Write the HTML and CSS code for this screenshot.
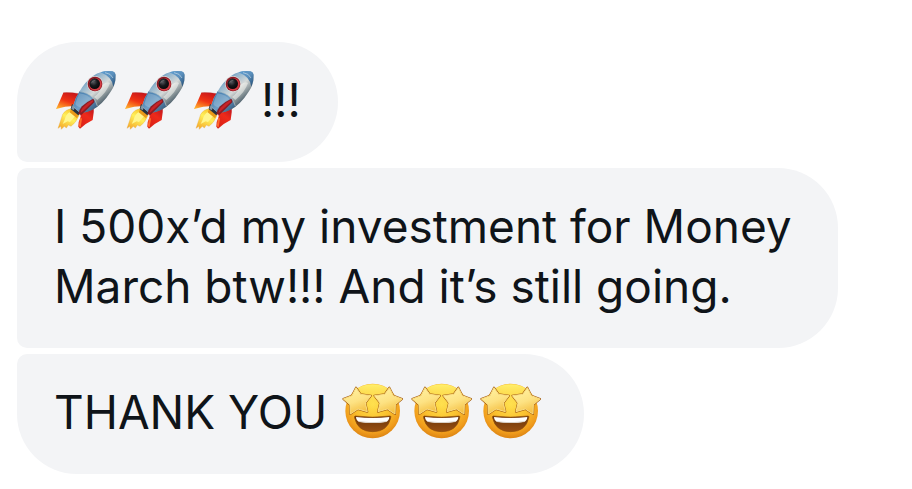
FILE: index.html
```html
<!DOCTYPE html>
<html lang="en">
<head>
    <meta charset="UTF-8">
    <meta name="viewport" content="width=device-width, initial-scale=1.0">
    <title>Messages</title>
    <link rel="stylesheet" href="styles.css">
</head>
<body>

    <!-- Emoji shapes, reused by the messages below -->
    <svg class="sprite" aria-hidden="true">
        <defs>
            <linearGradient id="hull" x1="0.2" y1="0.15" x2="0.75" y2="0.8">
                <stop offset="0" stop-color="#3d7cb0"/>
                <stop offset="0.25" stop-color="#8fb3cc"/>
                <stop offset="0.55" stop-color="#d5d9d8"/>
                <stop offset="0.8" stop-color="#7d8a8f"/>
                <stop offset="1" stop-color="#33495a"/>
            </linearGradient>
            <linearGradient id="nose" x1="0" y1="0" x2="1" y2="1">
                <stop offset="0" stop-color="#5c9cd0"/>
                <stop offset="0.5" stop-color="#5b90bd"/>
                <stop offset="1" stop-color="#1f4870"/>
            </linearGradient>
            <linearGradient id="band" x1="0" y1="0" x2="1" y2="1">
                <stop offset="0" stop-color="#2f6ba2"/>
                <stop offset="0.5" stop-color="#6f9fc6"/>
                <stop offset="1" stop-color="#26496c"/>
            </linearGradient>
            <linearGradient id="finLeft" x1="0.7" y1="0" x2="0.2" y2="1">
                <stop offset="0" stop-color="#c9161a"/>
                <stop offset="0.5" stop-color="#f03414"/>
                <stop offset="1" stop-color="#ffb02c"/>
            </linearGradient>
            <linearGradient id="finRight" x1="0.8" y1="0" x2="0.3" y2="1">
                <stop offset="0" stop-color="#b41220"/>
                <stop offset="0.5" stop-color="#ee2a1a"/>
                <stop offset="1" stop-color="#d92118"/>
            </linearGradient>
            <linearGradient id="flame" x1="0.8" y1="0" x2="0.2" y2="1">
                <stop offset="0" stop-color="#f7b91e"/>
                <stop offset="0.45" stop-color="#fff05a"/>
                <stop offset="1" stop-color="#f5a92a"/>
            </linearGradient>
            <radialGradient id="glass" cx="0.4" cy="0.35" r="0.7">
                <stop offset="0" stop-color="#55565c"/>
                <stop offset="0.5" stop-color="#17181c"/>
                <stop offset="1" stop-color="#050506"/>
            </radialGradient>
            <radialGradient id="face" cx="0.5" cy="0.38" r="0.64">
                <stop offset="0" stop-color="#ffe04c"/>
                <stop offset="0.5" stop-color="#fac02e"/>
                <stop offset="0.82" stop-color="#f09c1c"/>
                <stop offset="1" stop-color="#d87f12"/>
            </radialGradient>
            <linearGradient id="shine" x1="0" y1="0" x2="0" y2="1">
                <stop offset="0" stop-color="#fff06c"/>
                <stop offset="1" stop-color="#ffe052" stop-opacity="0"/>
            </linearGradient>
            <linearGradient id="star" x1="0.3" y1="0" x2="0.7" y2="1">
                <stop offset="0" stop-color="#fff1a0"/>
                <stop offset="0.5" stop-color="#fde283"/>
                <stop offset="1" stop-color="#f3ba38"/>
            </linearGradient>
            <linearGradient id="mouth" x1="0" y1="0" x2="0" y2="1">
                <stop offset="0" stop-color="#6b3509"/>
                <stop offset="1" stop-color="#995012"/>
            </linearGradient>
        </defs>

        <symbol id="rocket" viewBox="12 15 207 180">
            <path fill="url(#finLeft)" d="M40 83 Q64 82 87 86 L72 123 Q46 123 18 132 Q30 107 40 83Z"/>
            <path fill="none" stroke="#a8201b" stroke-width="1" d="M40 83 Q64 82 87 86"/>
            <path fill="url(#flame)" stroke="#e4a33a" stroke-width="1" d="M63 131 Q45 134 38 148 Q33 164 24 190 L33 184 L34 193 L43 184 L49 189 L55 180 L63 184 Q78 174 87 151Z"/>
            <path fill="#fff68e" d="M61 140 Q48 146 44 164 L38 177 L53 169 L60 171 L75 154Z"/>
            <path fill="#e99a19" d="M64 132 L86 150 L81 160 L59 142Z"/>
            <path fill="url(#finRight)" d="M131 116 Q133 141 128 165 Q109 174 90 191 L85 185 Q84 171 92 155 L91 147Z"/>
            <path fill="#ff6a2a" d="M91 157 L96 161 L92 187 L86 184Z"/>
            <path fill="#25313c" d="M66 117 L95 140 L85 151 L62 132Z"/>
            <path fill="#8297a4" d="M68 120 L76 126 L71 136 L64 131Z"/>
            <path fill="url(#hull)" d="M70 121 Q76 98 89 79 Q104 51 130 32 Q157 15 188 19 Q196 21 197 29 Q199 56 182 80 Q158 118 128 134 Q111 143 91 143 Q76 136 70 121Z"/>
            <path fill="url(#band)" d="M70 121 Q76 98 89 79 Q112 82 127 97 Q138 107 142 124 Q117 144 91 143 Q76 136 70 121Z"/>
            <path fill="#adc9db" d="M88 85 Q111 88 125 103 L97 128 Q81 127 76 117 Q80 100 88 85Z" opacity="0.4"/>
            <path fill="none" stroke="#bcc8c9" stroke-width="2" d="M89 80 Q113 82 127 97 Q138 107 142 123"/>
            <path fill="#8a1d25" d="M96 124 Q113 108 130 101 Q134 106 133 112 Q116 129 94 150 L85 147 Q88 133 96 124Z"/>
            <path fill="#c92327" d="M98 128 Q113 112 128 105 L129 110 L92 144 Q92 135 98 128Z"/>
            <path fill="url(#nose)" d="M151 22 Q169 16 188 19 Q196 21 197 29 Q198 47 190 65 Q186 35 151 22Z"/>
            <path fill="none" stroke="#e5eef2" stroke-width="2" opacity="0.8" d="M165 23 Q183 25 189 39"/>
            <path fill="#f6f6f1" opacity="0.55" d="M157 60 Q172 48 180 54 Q171 81 142 105 L132 96 Q151 83 157 60Z"/>
            <circle cx="135" cy="57" r="24" fill="#ded9d6"/>
            <circle cx="135" cy="57" r="22" fill="#8d1722"/>
            <circle cx="136" cy="58" r="19" fill="#d33b43"/>
            <circle cx="134" cy="56" r="16" fill="url(#glass)"/>
            <path fill="none" stroke="#8d8e93" stroke-width="2" opacity="0.7" d="M124 55 Q127 46 136 46"/>
        </symbol>

        <symbol id="starstruck" viewBox="6 12 207 180">
            <circle cx="104" cy="99" r="82" fill="url(#face)"/>
            <ellipse cx="104" cy="57" rx="62" ry="38" fill="url(#shine)"/>
            <path fill="url(#mouth)" stroke="#8d4b0b" stroke-width="2" d="M51 114 Q104 121 157 114 Q159 114 158 120 Q149 161 104 161 Q59 161 50 120 Q49 114 51 114Z"/>
            <path fill="#ffffff" d="M54 117 Q104 123 154 117 Q153 128 145 131 Q104 138 63 131 Q55 128 54 117Z"/>
            <path fill="#d8d2ca" d="M60 129 Q104 136 148 129 L145 132 Q104 138 63 132Z"/>
            <g stroke-linejoin="round">
                <g fill="none" stroke="#a65e10" stroke-width="6">
                    <path d="M54 29 L68 49 L99 53 L82 75 L88 101 L60 93 L37 108 L36 80 L16 63 L42 53Z"/>
                    <path d="M154 29 L140 49 L109 53 L126 75 L120 101 L148 93 L171 108 L172 80 L192 63 L166 53Z"/>
                </g>
                <g fill="url(#star)" stroke="#fbdf83" stroke-width="3">
                    <path d="M54 29 L68 49 L99 53 L82 75 L88 101 L60 93 L37 108 L36 80 L16 63 L42 53Z"/>
                    <path d="M154 29 L140 49 L109 53 L126 75 L120 101 L148 93 L171 108 L172 80 L192 63 L166 53Z"/>
                </g>
            </g>
        </symbol>
    </svg>

    <main class="thread">
        <p class="bubble first">
            <svg class="emoji" role="img" aria-label="rocket"><use href="#rocket"/></svg><svg class="emoji" role="img" aria-label="rocket"><use href="#rocket"/></svg><svg class="emoji" role="img" aria-label="rocket"><use href="#rocket"/></svg>!!!
        </p>
        <p class="bubble">I 500x’d my investment for Money March btw!!! And it’s still going.</p>
        <p class="bubble last">
            THANK YOU <svg class="emoji" role="img" aria-label="star-struck"><use href="#starstruck"/></svg><svg class="emoji" role="img" aria-label="star-struck"><use href="#starstruck"/></svg><svg class="emoji" role="img" aria-label="star-struck"><use href="#starstruck"/></svg>
        </p>
    </main>

</body>
</html>
```
FILE: styles.css
```css
body {
    margin: 0;
    background-color: #fff;
    color: #0f1419;
    font-family: Inter, "Liberation Sans", sans-serif;
    font-size: 46px;
    line-height: 60px;
}

.sprite {
    position: absolute;
    width: 0;
    height: 0;
}

.thread {
    display: flex;
    flex-direction: column;
    align-items: flex-start;
    gap: 6px;
    padding: 42px 74px 15px 17px;
}

.bubble {
    margin: 0;
    padding: 28px 37px 32px;
    background-color: #f3f4f6;
    border-radius: 10px 60px 60px 10px;
}

.bubble.first {
    border-top-left-radius: 60px;
}

.bubble.last {
    border-bottom-left-radius: 60px;
}

.emoji {
    width: 69px;
    height: 60px;
    vertical-align: top;
}
```
